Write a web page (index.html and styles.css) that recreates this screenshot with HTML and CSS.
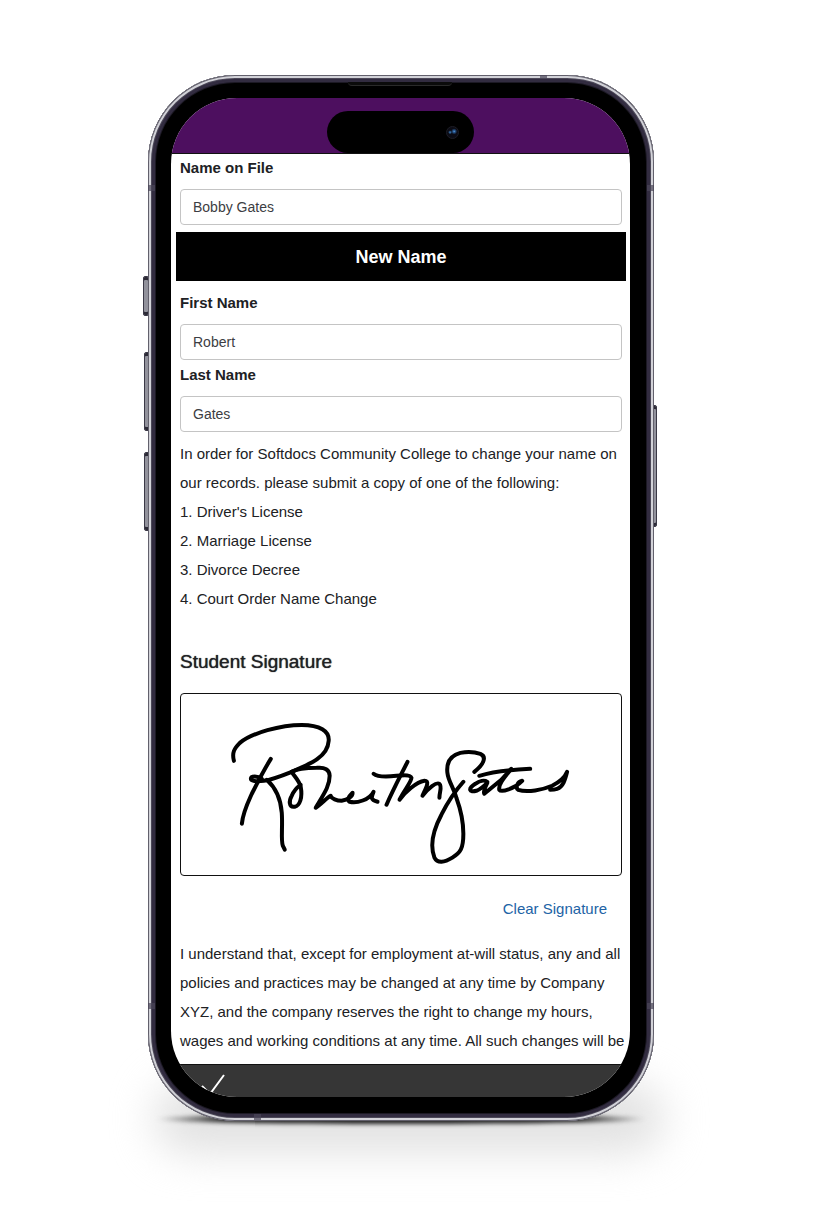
FILE: index.html
```html
<!DOCTYPE html>
<html lang="en">
<head>
    <meta charset="UTF-8">
    <meta name="viewport" content="width=device-width, initial-scale=1.0">
    <title>Name Change Form</title>
    <link rel="stylesheet" href="styles.css">
</head>
<body>
    <main class="stage">
        <div class="phone">
            <div class="floor-shadow"></div>
            <div class="contact-shadow"></div>
            <div class="side-button mute"></div>
            <div class="side-button volume-up"></div>
            <div class="side-button volume-down"></div>
            <div class="side-button power"></div>

            <div class="body">
                <div class="band band-left-top"></div>
                <div class="band band-right-top"></div>
                <div class="band band-left-bottom"></div>
                <div class="band band-right-bottom"></div>
                <div class="band band-top"></div>
                <div class="band band-bottom"></div>
                <div class="speaker"></div>

                <div class="screen">
                    <header class="status-bar">
                        <div class="island"><span class="camera"></span></div>
                    </header>

                    <form class="form">
                        <div class="field">
                            <label for="currentName">Name on File</label>
                            <input type="text" id="currentName" value="Bobby Gates">
                        </div>

                        <h2 class="banner">New Name</h2>

                        <div class="field">
                            <label for="firstName">First Name</label>
                            <input type="text" id="firstName" value="Robert">
                        </div>
                        <div class="field">
                            <label for="lastName">Last Name</label>
                            <input type="text" id="lastName" value="Gates">
                        </div>

                        <div class="text">
                            <p>In order for Softdocs Community College to change your name on our records. please submit a copy of one of the following:</p>
                            <ol>
                                <li>Driver's License</li>
                                <li>Marriage License</li>
                                <li>Divorce Decree</li>
                                <li>Court Order Name Change</li>
                            </ol>
                        </div>

                        <h3 class="signature-title">Student Signature</h3>
                        <div class="signature">
                            <svg viewBox="181 694 441 181" role="img" aria-label="Signature">
                                <!-- R -->
                                <path d="M234 761C232 753 234 749 240 743C252 733 281 725 302 725C320 725 330 731 329 741C328 757 311 764 292 772C282 776 272 780 264 781C256 782 251 781 251 779C251 776 258 776 262 779"/>
                                <path d="M271 759C263 772 257 784 252 794C247 805 243 813 242 824"/>
                                <path d="M267 780C277 789 281 800 282 813C283 827 281 840 283 846L285 850"/>
                                <!-- ober -->
                                <path d="M292 772C294 776 299 780 301 787C303 798 300 806 295 807C289 808 289 801 292 796C294 791 298 787 301 785"/>
                                <path d="M292 772C299 768 310 768 317 768C325 767 330 770 330 776C330 786 325 793 316 808C322 804 327 798 331 796C332 799 337 801 342 801C348 800 353 797 353 793C349 797 347 800 350 802C357 804 370 800 374 792C372 797 370 800 378 802"/>
                                <!-- tm -->
                                <path d="M374 774C379 778 389 777 397 776C405 775 411 775 412 778C412 782 405 790 400 800C405 793 417 782 425 781C431 781 426 789 423 796C429 788 437 782 440 784C443 787 440 792 440 798"/>
                                <path d="M408 762C401 776 394 789 387 805"/>
                                <!-- g -->
                                <path d="M475 772C484 765 488 757 481 754C475 752 467 752 461 753C450 756 447 764 448 773C449 782 454 787 457 798C461 809 464 822 464 834C464 849 461 853 453 858C445 863 438 864 435 858C430 845 434 830 442 815C448 803 456 791 464 782"/>
                                <!-- ates -->
                                <path d="M488 782C485 780 480 781 476 784C468 789 470 793 477 791C482 789 486 785 488 783C485 789 484 793 485 794C490 790 497 784 502 780L512 769C504 779 499 785 500 790C502 793 515 789 523 781C518 782 516 788 519 790C528 793 544 790 553 786C561 782 566 777 568 772C566 780 564 787 558 789C555 790 553 790 551 790"/>
                                <path d="M480 776C493 772 508 770 531 769"/>
                            </svg>
                        </div>
                        <button type="button" class="clear">Clear Signature</button>

                        <div class="text terms">
                            <p>I understand that, except for employment at-will status, any and all policies and practices may be changed at any time by Company XYZ, and the company reserves the right to change my hours, wages and working conditions at any time. All such changes will be</p>
                        </div>
                    </form>

                    <footer class="toolbar">
                        <button type="button" class="submit" aria-label="Submit">
                            <svg viewBox="0 0 26 24"><path d="M1 13L9 21L23 2"/></svg>
                        </button>
                    </footer>
                </div>
            </div>
        </div>
    </main>
</body>
</html>
```

FILE: styles.css
```css
* {
    box-sizing: border-box;
}
body {
    margin: 0;
    background-color: #fff;
    color: #202124;
    font-family: "Liberation Sans", Arial, Helvetica, sans-serif;
    font-size: 15px;
}
h2, h3, p, ol {
    margin: 0;
    padding: 0;
}
.stage {
    display: flex;
    justify-content: center;
    padding: 75px 26px 92px 0;
    overflow: hidden;
}

/* Phone */
.phone {
    position: relative;
    width: 100%;
    max-width: 506px;
}
.body {
    position: relative;
    padding: 23px 24px 24px 23px;
    border-radius: 87px;
    background-color: #000;
    box-shadow:
        inset 0 0 0 1px #62606c,
        inset 0 0 0 3px #d2d2d8,
        inset 0 0 0 4px #4c4858,
        inset 0 0 0 7px #322c40,
        inset 0 0 0 8px #1c1924;
}
.floor-shadow {
    position: absolute;
    left: 6px;
    right: -10px;
    bottom: -32px;
    height: 70px;
    border-radius: 35px;
    background-color: #e2e2e2;
    filter: blur(20px);
}
.contact-shadow {
    position: absolute;
    left: 8px;
    right: 8px;
    bottom: -3px;
    height: 10px;
    border-radius: 50%;
    background: linear-gradient(90deg, transparent, #222 14%, #222 86%, transparent);
    filter: blur(2px);
}
.side-button {
    position: absolute;
    width: 6px;
    border: 1px solid #3b3947;
    border-radius: 2px;
    background-color: #92929c;
    box-shadow: inset 0 3px 0 #2c2a36, inset 0 -3px 0 #2c2a36;
}
.mute {
    left: -5px;
    top: 201px;
    height: 40px;
}
.volume-up {
    left: -4px;
    top: 277px;
    height: 79px;
}
.volume-down {
    left: -4px;
    top: 377px;
    height: 79px;
}
.power {
    right: -3px;
    top: 330px;
    height: 122px;
}
.band {
    position: absolute;
    width: 7px;
    height: 6px;
    background-color: #4a4658;
    opacity: 0.7;
}
.band-left-top {
    left: 0;
    top: 110px;
}
.band-right-top {
    right: 0;
    top: 110px;
}
.band-left-bottom {
    left: 0;
    bottom: 112px;
}
.band-right-bottom {
    right: 0;
    bottom: 112px;
}
.band-top {
    right: 107px;
    top: 0;
    height: 4px;
}
.band-bottom {
    left: 106px;
    bottom: 1px;
}
.speaker {
    position: absolute;
    top: 7px;
    left: 50%;
    width: 104px;
    height: 4px;
    margin-left: -53px;
    border-bottom: 1px solid #2a2a2a;
    border-radius: 0 0 4px 4px;
    background-color: #0b0b0b;
}

/* Screen */
.screen {
    overflow: hidden;
    border-radius: 66px;
    background-color: #fff;
}
.status-bar {
    display: flex;
    justify-content: center;
    padding-top: 13px;
    border-bottom: 1px solid #111;
    background-color: #4d0f5f;
}
.island {
    display: flex;
    align-items: center;
    justify-content: flex-end;
    width: 147px;
    height: 42px;
    padding-right: 15px;
    border-radius: 21px;
    background-color: #000;
}
.camera {
    width: 13px;
    height: 13px;
    border: 1px solid #1c1c24;
    border-radius: 50%;
    background: radial-gradient(circle at 65% 40%, #5da2e8 0, #2a5c96 1px, transparent 3px), radial-gradient(circle at 28% 48%, #3f83c4 0, transparent 2px), #0b0b14;
}
.form {
    display: flex;
    flex-direction: column;
    padding: 0 8px 9px 9px;
}
.field {
    display: flex;
    flex-direction: column;
}
.field label {
    line-height: 28px;
    margin-bottom: 7px;
    font-weight: bold;
}
.field input {
    width: 100%;
    height: 36px;
    padding: 1px 12px;
    border: 1px solid #c4c4c4;
    border-radius: 4px;
    background-color: #fff;
    color: #3c3d42;
    font-family: inherit;
    font-size: 14px;
}
.field + .field {
    margin-top: 1px;
}
.banner {
    margin: 7px -4px 8px;
    padding-top: 1px;
    background-color: #000;
    color: #fff;
    font-size: 18px;
    line-height: 48px;
    text-align: center;
}
.text {
    line-height: 29px;
}
.field + .text {
    margin-top: 7px;
}
.terms {
    margin-right: -8px;
}
.text ol {
    list-style-position: inside;
}
.signature-title {
    margin: 35px 0 17px;
    font-size: 19px;
    font-weight: normal;
    line-height: 28px;
    text-shadow: 0 0 1px #202124;
}
.signature {
    border: 1px solid #111;
    border-radius: 4px;
}
.signature svg {
    display: block;
    width: 100%;
    fill: none;
    stroke: #000;
    stroke-width: 4;
    stroke-linecap: round;
    stroke-linejoin: round;
}
.clear {
    align-self: flex-end;
    margin: 18px 15px 16px 0;
    padding: 0;
    border: none;
    background: none;
    color: #2263a5;
    font-family: inherit;
    font-size: 15px;
    line-height: 29px;
    cursor: pointer;
}
.toolbar {
    height: 33px;
    padding: 8px 30px 0;
    border-top: 1px solid #111;
    background-color: #363636;
}
.submit {
    display: block;
    padding: 0;
    border: none;
    background: none;
    cursor: pointer;
}
.submit svg {
    display: block;
    width: 26px;
    height: 24px;
    fill: none;
    stroke: #fff;
    stroke-width: 2;
}
```
